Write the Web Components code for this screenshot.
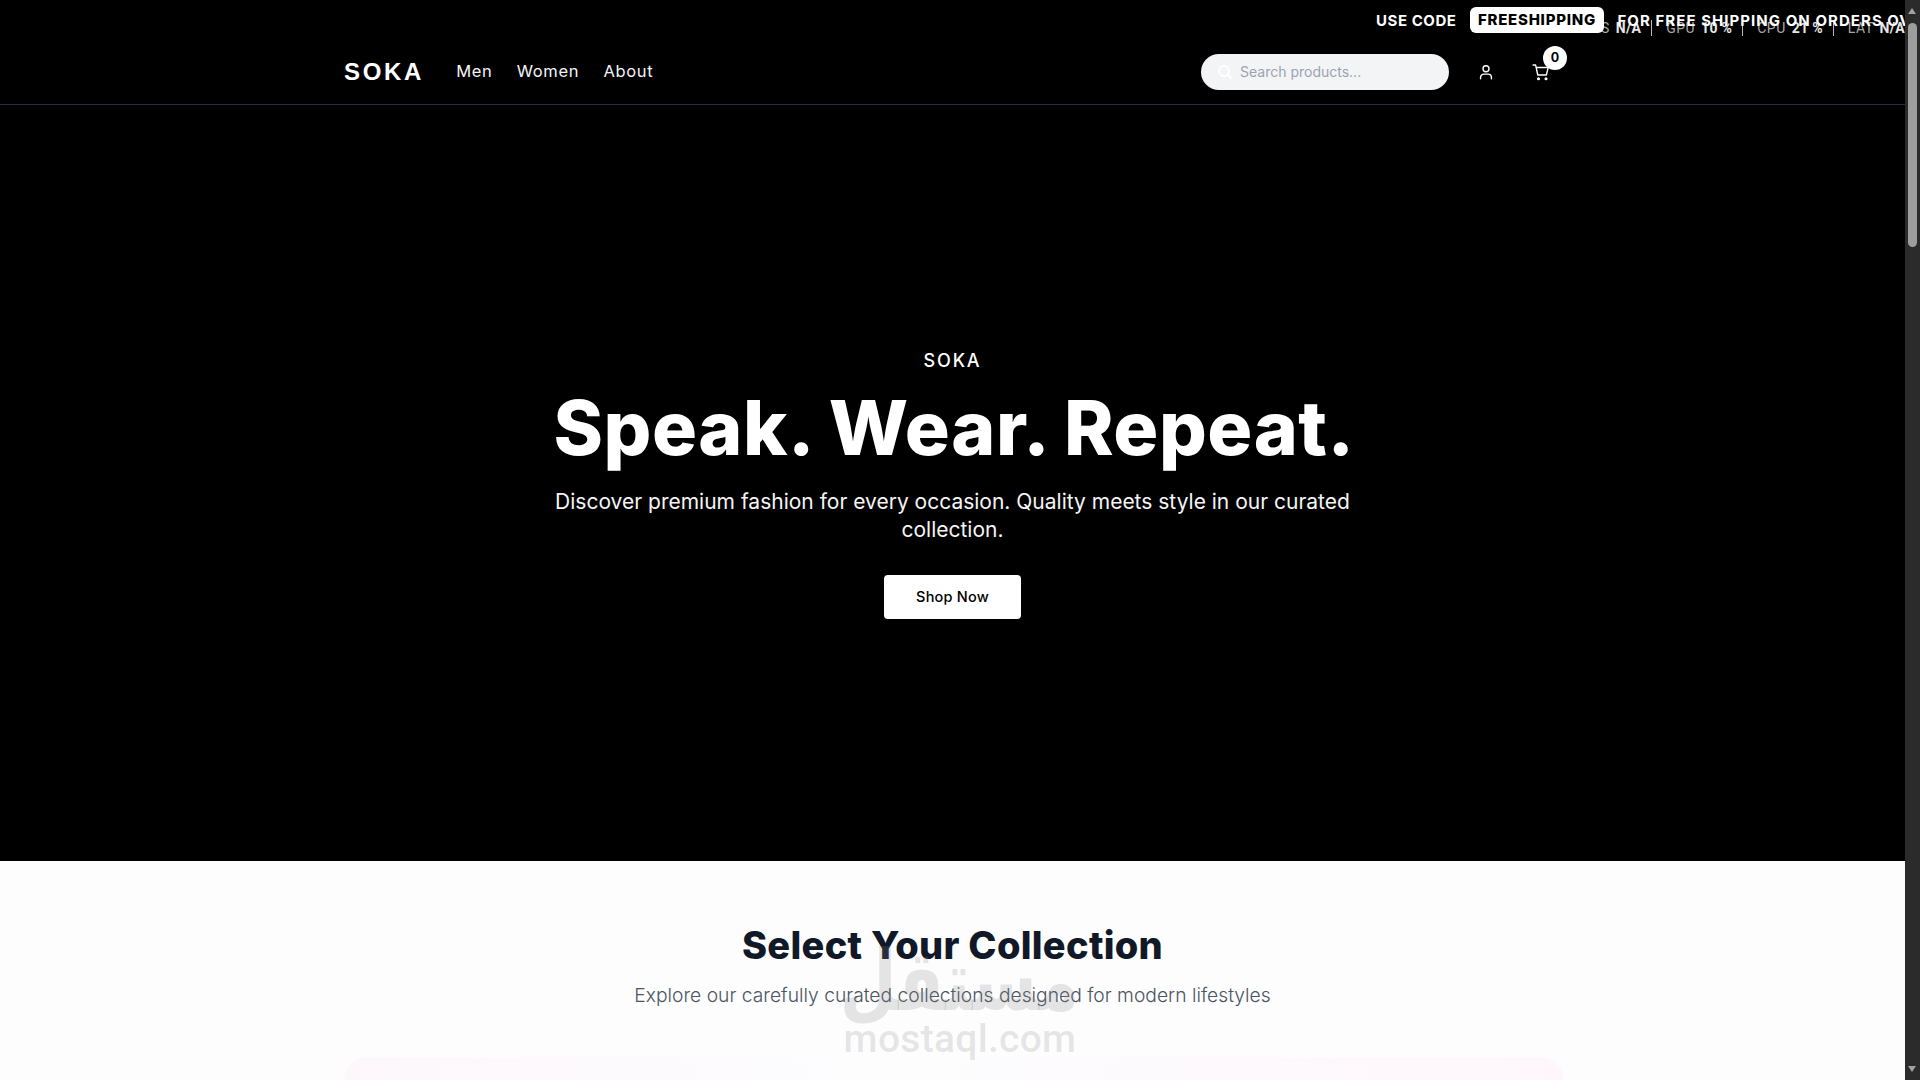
<!DOCTYPE html>
<html><head><meta charset="utf-8"><title>SOKA</title>
<style>
html,body{margin:0;padding:0;height:1080px;overflow:hidden;background:#000}
body{font-family:"Open Sans","Liberation Sans",sans-serif}
soka-app{display:block;height:1080px}
</style></head><body>
<soka-app></soka-app>
<script>
class SokaBase extends HTMLElement{
  constructor(){super();this.attachShadow({mode:'open'}).innerHTML=this.constructor.markup}
}
const wide='"Inter","Liberation Sans",sans-serif';

class PromoBar extends SokaBase{static markup=`<style>
:host{position:absolute;top:0;right:15px;width:529px;height:40px;overflow:hidden;display:block;font:700 15px ${wide};color:#fff}
.row{display:flex;align-items:center;height:40px;white-space:nowrap;gap:13.5px}
.a{letter-spacing:.55px}
.c{letter-spacing:1.05px}
b{background:#fff;color:#000;border-radius:6px;padding:0 8px;width:121px;height:26px;line-height:26px;font-weight:800;font-size:15px;letter-spacing:.75px}
</style><div class="row"><span class="a">USE CODE</span><b>FREESHIPPING</b><span class="c">FOR FREE SHIPPING ON ORDERS OVER</span></div>`}
customElements.define('promo-bar',PromoBar);

class PerfHud extends SokaBase{static markup=`<style>
:host{position:absolute;top:18px;right:15px;height:20px;display:flex;justify-content:flex-end;align-items:center;font:400 14px "Roboto",sans-serif;color:#a8a8a8;white-space:nowrap}
span{padding:0 10px 0 14px;border-right:1px solid #bbb;line-height:16px;letter-spacing:.5px}
span:last-child{border:0;padding-right:0}
b{font-weight:700;color:#e6e6e6;margin-left:6px;letter-spacing:.3px}
</style><span>FPS<b>N/A</b></span><span>GPU<b>10 %</b></span><span>CPU<b>21 %</b></span><span>LAT<b>N/A</b></span>`}
customElements.define('perf-hud',PerfHud);

class SiteHeader extends SokaBase{static markup=`<style>
:host{display:block;height:105px;box-sizing:border-box;border-bottom:1px solid #2a3040;background:#000;color:#fff}
.in{box-sizing:border-box;width:1220px;margin-left:344px;height:104px;padding:40px 13px 0 0;display:flex;align-items:center}
.logo{font:700 24px "Liberation Sans",sans-serif;letter-spacing:2.7px;margin-right:32px}
nav{display:flex;gap:24.5px;font:400 16.5px ${wide};letter-spacing:.62px;color:#f3f4f6;padding-bottom:2px}
.sp{flex:1}
.search{width:248px;height:36px;border-radius:18px;background:#f3f4f6;display:flex;align-items:center;box-sizing:border-box;padding:0 0 1px 17px;color:#9ca3af;font:400 14px ${wide}}
.search svg{margin:1px 8px 0 0;stroke:#fff;stroke-width:2}
.user{margin-left:27px;margin-right:35px;width:20px;height:20px}
.cart{position:relative;width:20px;height:20px}
.badge{position:absolute;left:12px;top:-16px;width:24px;height:24px;border-radius:50%;background:#fff;color:#000;font:700 12.5px/24px ${wide};text-align:center}
svg{display:block;fill:none;stroke:#fff;stroke-width:1.7;stroke-linecap:round;stroke-linejoin:round}
</style><div class="in"><div class="logo">SOKA</div><nav><span>Men</span><span>Women</span><span>About</span></nav><div class="sp"></div>
<div class="search"><svg width="14" height="14" viewBox="0 0 14 14"><circle cx="6" cy="6" r="5"/><path d="M10 10l3 3"/></svg>Search products...</div>
<svg class="user" viewBox="0 0 24 24"><circle cx="12" cy="8" r="3.6"/><path d="M5.5 20v-1.5a4 4 0 0 1 4-4h5a4 4 0 0 1 4 4V20"/></svg>
<div class="cart"><svg width="20" height="20" viewBox="0 0 24 24"><path d="M2.5 3.5h3l2.6 12h10.4l2.2-9H6.2"/><circle cx="9" cy="20" r="1"/><circle cx="18" cy="20" r="1"/></svg><div class="badge">0</div></div></div>`}
customElements.define('site-header',SiteHeader);

class HeroSection extends SokaBase{static markup=`<style>
:host{display:flex;flex-direction:column;align-items:center;height:756px;box-sizing:border-box;padding-top:244px;background:#000;color:#fff;text-align:center}
.k{font:500 18px/24px ${wide};letter-spacing:1.8px}
h1{margin:15px 0 0;padding-left:3px;font:800 75px/80px ${wide};letter-spacing:.55px;white-space:nowrap}
p{margin:20px 0 0;width:800px;font:400 21px/28px ${wide};color:#f5f5f5}
.b{margin-top:31px;width:137px;height:44px;border-radius:4px;background:#fff;color:#000;font:500 14.5px/44px ${wide};letter-spacing:.2px}
</style><div class="k">SOKA</div><h1>Speak. Wear. Repeat.</h1><p>Discover premium fashion for every occasion. Quality meets style in our curated collection.</p><div class="b">Shop Now</div>`}
customElements.define('hero-section',HeroSection);

class CollectionSection extends SokaBase{static markup=`<style>
:host{display:block;height:219px;background:#fdfdfe;text-align:center;overflow:hidden;position:relative}
h2{margin:0;padding-top:62px;font:800 38px/44px ${wide};letter-spacing:.3px;color:#111827}
p{margin:14px 0 0;font:300 19.25px/28px ${wide};color:#4b5563}
.card{position:absolute;left:344px;top:196px;width:1220px;height:100px;border-radius:24px;background:linear-gradient(90deg,#fdf7fc,#fdfdfe 45%,#fef6fb)}
</style><h2>Select Your Collection</h2><p>Explore our carefully curated collections designed for modern lifestyles</p><div class="card"></div>`}
customElements.define('collection-section',CollectionSection);

class Watermark extends SokaBase{static markup=`<style>
:host{position:absolute;left:845px;top:945px;width:230px;height:115px;display:flex;flex-direction:column;align-items:center;pointer-events:none;color:rgba(130,130,130,.2);white-space:nowrap}
.ar{font:700 84px/72px "DejaVu Sans",sans-serif;height:72px;transform:scaleX(.78)}
.la{font:500 39px/40px "Roboto",sans-serif;letter-spacing:.3px;margin-top:2px}
</style><div class="ar" lang="ar" dir="rtl">مستقل</div><div class="la">mostaql.com</div>`}
customElements.define('watermark-mark',Watermark);

class FakeScrollbar extends SokaBase{static markup=`<style>
:host{position:absolute;top:0;right:0;width:15px;height:1080px;background:#2b2b2b;display:block}
.u,.d{position:absolute;left:3px;width:0;height:0;border-left:4.5px solid transparent;border-right:4.5px solid transparent}
.u{top:8px;border-bottom:6px solid #a0a0a0}.d{bottom:8px;border-top:6px solid #a0a0a0}
.t{position:absolute;left:3px;top:23px;width:9px;height:224px;border-radius:5px;background:#9e9e9e}
</style><div class="u"></div><div class="t"></div><div class="d"></div>`}
customElements.define('fake-scrollbar',FakeScrollbar);

class SokaApp extends SokaBase{static markup=`<style>
:host{display:block;position:relative;height:1080px;width:1920px;overflow:hidden}
main{width:1905px}
</style><main><site-header></site-header><hero-section></hero-section><collection-section></collection-section></main>
<perf-hud></perf-hud><promo-bar></promo-bar><watermark-mark></watermark-mark><fake-scrollbar></fake-scrollbar>`}
customElements.define('soka-app',SokaApp);
</script></body></html>
